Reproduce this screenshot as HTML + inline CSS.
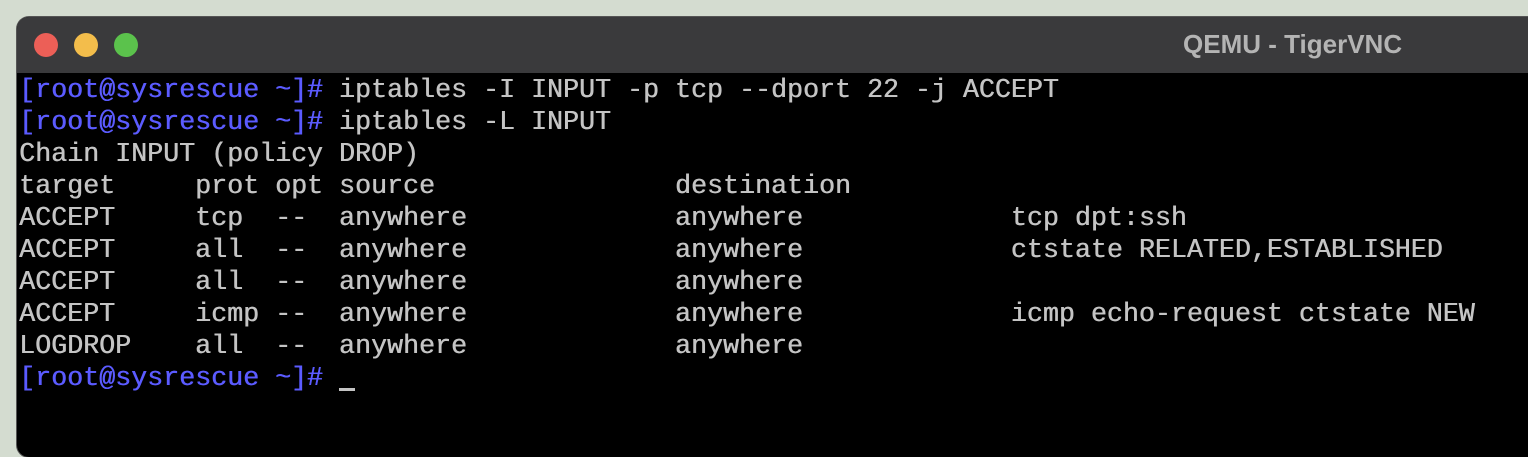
<!DOCTYPE html>
<html><head><style>
html,body{margin:0;padding:0;width:1528px;height:434px;overflow:hidden;background:#d4dcd0;}
.win{position:absolute;left:17px;top:17px;width:1540px;height:440px;border-radius:12px;overflow:hidden;background:#000;box-shadow:0 0 0 1px #555;}
.tb{position:absolute;left:0;top:0;right:0;height:56px;background:#3a3a3c;}
.dot{position:absolute;top:16px;width:24px;height:24px;border-radius:50%;}
.title{position:absolute;left:1166px;top:12px;font:bold 26px "Liberation Sans",sans-serif;color:#b4b4b4;}
pre{position:absolute;left:2px;top:58px;margin:0;font:26.67px/32px "Liberation Mono",monospace;color:#c4c4c4;text-shadow:0.5px 0 0 #c4c4c4;}
.b{color:#5b5bff;text-shadow:0.5px 0 0 #5b5bff;}
.cur{display:inline-block;width:16px;height:3px;background:#c4c4c4;vertical-align:-6px;}
</style></head><body>
<div class="win">
<div class="tb">
<div class="dot" style="left:17px;background:#ec5f57"></div>
<div class="dot" style="left:57px;background:#f3bd4b"></div>
<div class="dot" style="left:97px;background:#5bc24c"></div>
<div class="title">QEMU - TigerVNC</div>
</div>
<pre><span class="b">[root@sysrescue ~]#</span> iptables -I INPUT -p tcp --dport 22 -j ACCEPT
<span class="b">[root@sysrescue ~]#</span> iptables -L INPUT
Chain INPUT (policy DROP)
target     prot opt source               destination
ACCEPT     tcp  --  anywhere             anywhere             tcp dpt:ssh
ACCEPT     all  --  anywhere             anywhere             ctstate RELATED,ESTABLISHED
ACCEPT     all  --  anywhere             anywhere
ACCEPT     icmp --  anywhere             anywhere             icmp echo-request ctstate NEW
LOGDROP    all  --  anywhere             anywhere
<span class="b">[root@sysrescue ~]#</span> <span class="cur"></span></pre>
</div>
</body></html>
